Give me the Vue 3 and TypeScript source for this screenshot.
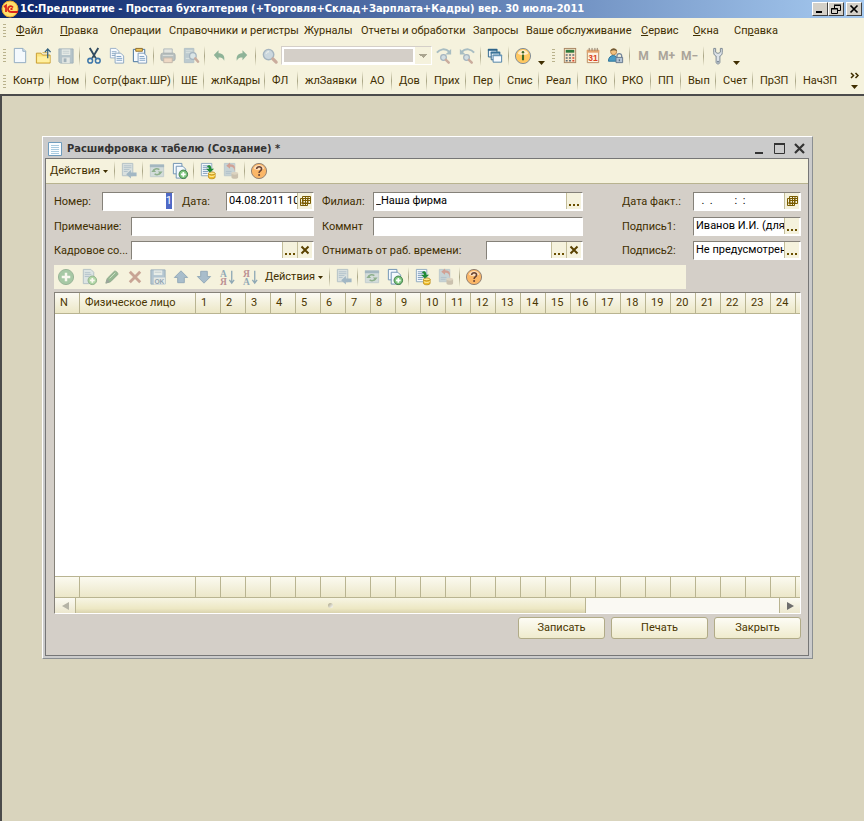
<script setup lang="ts">
import { onMounted, ref } from 'vue'

interface Tool {
  kind: 'icon' | 'sep' | 'text' | 'more' | 'grip' | 'combo' | 'label'
  name?: string
  title?: string
  off?: boolean
}

const icon = (name: string, title: string, off = false): Tool => ({ kind: 'icon', name, title, off })
const memory = (name: string, title: string): Tool => ({ kind: 'text', name, title, off: true })
const sep: Tool = { kind: 'sep' }

const page = '<path d="M3.5 1.5h9l3 3v12h-12z" fill="#f4f9fd" stroke="#8fa9c0"/><path d="M12.5 1.5v3h3" fill="#d3e2ef" stroke="#8fa9c0"/>'
const disk = '<path d="M2 2h15v15H3.500L2 15.500z" fill="#7f9db9" stroke="#5f7f9f"/><path d="M5 2.500h9v6H5z" fill="#dbe6ef"/><path d="M6 4.500h7M6 6.500h7" stroke="#9ab0c4"/><path d="M5.500 11h8v6h-8z" fill="#d5dfe8"/><path d="M7 12h3v4H7z" fill="#5f7f9f"/>'
const plus = '<circle cx="13" cy="13" r="4.500" fill="#7cc47c" stroke="#3b7a45"/><path d="M13 10.500v5M10.500 13h5" stroke="#fff" stroke-width="1.800"/>'
const cyl = '<path d="M10 12v4c0 2.300 7 2.300 7 0v-4z" fill="#f0bd2c" stroke="#b98a12" stroke-width=".8"/><ellipse cx="13.500" cy="12" rx="3.500" ry="1.500" fill="#ffe98c" stroke="#b98a12" stroke-width=".8"/><path d="M10.300 14.300c1 1.300 5.400 1.300 6.400 0" fill="none" stroke="#fff0a8"/>'
const listPage = '<path d="M2.500 1.500h11v13h-11z" fill="#f7fafc" stroke="#8fa9c0"/><path d="M4 4h8M4 6h8M4 8h8M4 10h6M4 12h5" stroke="#7c9cbc"/>'
const lens = '<circle cx="8" cy="8" r="5.500" fill="#a9c2e0" stroke="#6483a8" stroke-width="1.500"/><path d="M5.500 7c.5-1.500 1.500-2 3-2" fill="none" stroke="#fff"/><path d="M12.500 12.500l3.500 3.500" stroke="#a8746a" stroke-width="3.400" stroke-linecap="round"/>'
const smallLens = '<circle cx="9" cy="11" r="3" fill="#b9cfe6" stroke="#6483a8" stroke-width="1.300"/><path d="M11.500 13.500l3 3" stroke="#a8746a" stroke-width="2.600" stroke-linecap="round"/>'

const icons: Record<string, string> = {
  blank: page,
  open: '<path d="M2.500 6.500h5l1.500 2h8v8.500h-14.500z" fill="#fbe27a" stroke="#c79a2f"/><path d="M3.500 10h13v6h-13z" fill="#ffef9f"/><path d="M9 6h5" stroke="#d7ae45"/><path d="M14.500 12V3M11.500 5.500l3-3.500 3 3.500" fill="none" stroke="#305f7c" stroke-width="1.300"/>',
  save: disk,
  cut: '<path d="M5 1l6.500 11M14 1L7.500 12" stroke="#2f4a60" stroke-width="2"/><circle cx="5.500" cy="14.500" r="2.500" fill="none" stroke="#3d76aa" stroke-width="1.600"/><circle cx="13.500" cy="14.500" r="2.500" fill="none" stroke="#3d76aa" stroke-width="1.600"/>',
  copy: '<path d="M2.500 1.500h6l3 3v7h-9z" fill="#f8fbfe" stroke="#9ab0c8"/><path d="M4 5h5M4 7h5M4 9h4" stroke="#8aa6c4"/><path d="M7.500 6.500h6l3 3v7.500h-9z" fill="#f8fbfe" stroke="#8da7c2"/><path d="M9 10h5M9 12h6M9 14h6" stroke="#7da0c4"/>',
  paste: '<path d="M2.500 2.500h12v13h-12z" fill="#f7fbfe" stroke="#3e6d99"/><path d="M5 1.500h7v3H5z" fill="#f3c95b" stroke="#8e6d2c"/><path d="M7.500 6.500h6l3 3v7.500h-9z" fill="#f8fbfe" stroke="#7f9cba"/><path d="M9 10h5M9 12h6M9 14h6" stroke="#7da0c4"/>',
  print: '<path d="M5 2h9v5H5z" fill="#d4dbe4" stroke="#7b8ea2"/><rect x="2" y="6.500" width="15" height="8" rx="2" fill="#8898a8" stroke="#68798b"/><path d="M5 11.500h9v5H5z" fill="#e9c3b0" stroke="#9d8a82"/><path d="M4 9h11" stroke="#c7d1da"/>',
  preview: '<path d="M2.500 1.500h10v15h-10z" fill="#8fabc4" stroke="#7f9ab4"/><path d="M4 4h7M4 6h5M4 12h4" stroke="#c9d9e6"/><circle cx="11.500" cy="9.500" r="3.500" fill="#c5dbee" stroke="#6483a8" stroke-width="1.300"/><path d="M14 12l3 3.500" stroke="#a8746a" stroke-width="2.600" stroke-linecap="round"/>',
  undo: '<path d="M4 8.500l5-5v3c4 0 7 2 6 8-1.500-3-3-3.500-6-3.500v3z" fill="#3b8060"/>',
  redo: '<path d="M15 8.500l-5-5v3c-4 0-7 2-6 8 1.500-3 3-3.500 6-3.500v3z" fill="#3b8060"/>',
  find: lens,
  next: '<path d="M2 6c3-4 9-5 13-1" fill="none" stroke="#6a93ad" stroke-width="2"/><path d="M17 2v6h-6z" fill="#6a93ad"/>' + smallLens,
  prev: '<path d="M17 6c-3-4-9-5-13-1" fill="none" stroke="#6a93ad" stroke-width="2"/><path d="M2 2v6h6z" fill="#6a93ad"/>' + smallLens,
  windows: '<path d="M2.500 2.500h9v8h-9z" fill="#eaf3fa" stroke="#2d6389"/><path d="M2 3h10" stroke="#2d6389" stroke-width="2"/><path d="M5.500 5.500h9v8h-9z" fill="#eaf3fa" stroke="#2d6389"/><path d="M5 6h10" stroke="#397298" stroke-width="2"/><path d="M7.500 8.500h9v7.500h-9z" fill="#f7fbfe" stroke="#4c7fa5"/><path d="M7 9h10" stroke="#6796b8" stroke-width="1.500"/>',
  info: '<circle cx="9.500" cy="9.500" r="8" fill="#ffc861" stroke="#7d8b97"/><path d="M4 7c1-5 10-5 11 0-3 2-8 2-11 0z" fill="#fff" opacity=".65"/><circle cx="9.500" cy="5.500" r="1.300" fill="#3f6a28"/><path d="M9.500 8v6" stroke="#3f6a28" stroke-width="2.200"/>',
  calc: '<rect x="3.500" y="1.500" width="12" height="15" fill="#f6e3c8" stroke="#a98561"/><path d="M5 3h9v3H5z" fill="#2f7a3c"/><path d="M5 8.500h2M8.500 8.500h2M12 8.500h2M5 11.500h2M8.500 11.500h2M5 14.500h2M8.500 14.500h2" stroke="#5d6d74" stroke-width="1.600"/><path d="M12 11.500h2M12 14.500h2" stroke="#d9472b" stroke-width="1.600"/>',
  calendar: '<path d="M3.500 3.500h12v13h-12z" fill="#fdf3e2" stroke="#b98a5f"/><path d="M3 3h13v3H3z" fill="#e3a36d"/><path d="M5.500 1v3M8.500 1v3M11.500 1v3M14 1v3" stroke="#8c7b68"/><text x="9.500" y="15" text-anchor="middle" font-family="Liberation Sans, sans-serif" font-size="9" font-weight="bold" fill="#db4420">31</text>',
  user: '<circle cx="7" cy="5" r="3.200" fill="#f4c27f" stroke="#a9733c" stroke-width=".8"/><path d="M3.500 4.500C4 .5 10.500.5 10.500 4.500 9 3 6 3 3.500 4.500z" fill="#6d5a36"/><path d="M1.500 15c0-8 10-8 10 0z" fill="#4a9bc4" stroke="#2d7297"/><path d="M10.500 11V9.500a2.500 2.500 0 015 0V11" fill="none" stroke="#75869a" stroke-width="1.400"/><path d="M9.500 11h7v5.500h-7z" fill="#b4c4d4" stroke="#64788d"/><path d="M13 13v2" stroke="#44566a"/>',
  wrench: '<path d="M5 1.500v4.500c0 2 1 3 2.500 3.500v6.500c0 2.500 4 2.500 4 0V9.500C13 9 14 8 14 6V1.500h-2v4l-1.500 1h-2L7 5.500v-4z" fill="#dde3e8" stroke="#7a8690"/><circle cx="9.500" cy="15.500" r="1" fill="#6d7d8c"/>',
  close: '<path d="M2.500 1.500h11v13h-11z" fill="#c3d3e2" stroke="#7f9ab4"/><path d="M4 4h8M4 6h8M4 8h6M4 10h4" stroke="#7c9cbc"/><path d="M17.500 11v4h-6v2.500L6.500 13l5-4.500V11z" fill="#5f88b0"/>',
  refresh: '<path d="M2.500 3.500h14v12h-14z" fill="#b9cbd9" stroke="#9bb0c4"/><path d="M2 4h15" stroke="#6387aa" stroke-width="3"/><path d="M6 9c1-2 4-2.500 6-1M13 11.500c-1 2-4 2.500-6 1" fill="none" stroke="#3a7a4a" stroke-width="1.600"/><path d="M3.500 10.500l2.500-3 2.500 3zM10.500 10l2.500 3 2.500-3z" fill="#3a7a4a"/>',
  addcopy: '<path d="M2.500 1.500h9v11h-9z" fill="#f4f9fd" stroke="#6e91b2"/><path d="M5.500 4.500h7l3 3v9.500h-10z" fill="#f4f9fd" stroke="#6e91b2"/>' + plus,
  post: listPage + cyl + '<path d="M8 5c3-3 5-1.500 5 2h3l-4.500 4L7.500 7h3c0-1.500-1-2-2.500-2z" fill="#218a35"/>',
  unpost: '<path d="M2.500 1.500h11v13h-11z" fill="#a3bbcf" stroke="#8fa9c0"/><path d="M4 10h6M4 12h5" stroke="#7c9cbc"/><path d="M10 12v4c0 2.300 7 2.300 7 0v-4z" fill="#a99a88"/><ellipse cx="13.500" cy="12" rx="3.500" ry="1.500" fill="#c9bba9"/><path d="M12.500 10.500c1-4-.5-5.500-4-5.500V7L4.500 4l4-3.500v2c5 0 6.500 3 4 8z" fill="#b5605a"/>',
  help: '<circle cx="9.500" cy="9.500" r="8" fill="#fbb768" stroke="#8d7d70"/><path d="M4 7c1-5 10-5 11 0-3 2-8 2-11 0z" fill="#fff" opacity=".55"/><path d="M7 7.500c0-3.500 5.500-3.200 5.200 0-.2 1.900-2.600 1.900-2.600 4" fill="none" stroke="#6a4434" stroke-width="1.700"/><circle cx="9.600" cy="13.700" r="1.100" fill="#6a4434"/>',
  add: '<circle cx="9.500" cy="9.500" r="8" fill="#69a979" stroke="#4b805b"/><path d="M9.500 5v9M5 9.500h9" stroke="#fff" stroke-width="2.600"/>',
  addpage: '<path d="M3.500 1.500h8l3 3v12h-11z" fill="#c9dae8" stroke="#7f9ab4"/><path d="M5 5h6M5 7h7M5 9h5" stroke="#7c9cbc"/>' + plus,
  edit: '<path d="M3 16l1.500-5L12 3.500c1.500-1 4.500 2 3.500 3.500L8 14.500z" fill="#4b8a57" stroke="#3c6d49"/><path d="M3 16l1.200-4 2.800 2.800z" fill="#55616b"/><path d="M7 11l6-6" stroke="#b3d9b6"/>',
  remove: '<path d="M4 4l11 11M15 4L4 15" stroke="#a5665c" stroke-width="3"/>',
  saveok: '<path d="M2 2h15v15H2z" fill="#7fa3c8" stroke="#54799f"/><path d="M5 2.500h9v5H5z" fill="#dfe9f2"/><path d="M6 4.500h7" stroke="#9ab0c4"/><path d="M5 10h12v7.500H5z" fill="#d8e2ec"/><text x="11" y="16.500" text-anchor="middle" font-family="Liberation Sans, sans-serif" font-size="7" font-weight="bold" fill="#3f658c">OK</text>',
  up: '<path d="M9.500 3l7 7H13v5.500H6V10H2.500z" fill="#6a93bd" stroke="#456f9b"/>',
  down: '<path d="M9.500 16l7-7H13V3.500H6V9H2.500z" fill="#6a93bd" stroke="#456f9b"/>',
  asc: '<text x="2" y="9" font-family="Liberation Serif, serif" font-size="10" font-weight="bold" fill="#3e6e96">А</text><text x="2" y="18" font-family="Liberation Serif, serif" font-size="10" font-weight="bold" fill="#8e3f58">Я</text><path d="M14.500 3v12M12 12.500l2.500 3.500 2.500-3.500" fill="none" stroke="#3e6e96" stroke-width="1.400"/>',
  desc: '<text x="2" y="9" font-family="Liberation Serif, serif" font-size="10" font-weight="bold" fill="#8e3f58">Я</text><text x="2" y="18" font-family="Liberation Serif, serif" font-size="10" font-weight="bold" fill="#3e6e96">А</text><path d="M14.500 3v12M12 12.500l2.500 3.500 2.500-3.500" fill="none" stroke="#3e6e96" stroke-width="1.400"/>',
}

const mainTools: Tool[] = [
  { kind: 'grip' },
  icon('blank', 'Новый'), icon('open', 'Открыть'), icon('save', 'Сохранить', true), sep,
  icon('cut', 'Вырезать'), icon('copy', 'Копировать'), icon('paste', 'Вставить'), sep,
  icon('print', 'Печать', true), icon('preview', 'Просмотр', true), sep,
  icon('undo', 'Отменить', true), icon('redo', 'Вернуть', true), sep,
  icon('find', 'Найти', true), { kind: 'combo' },
  icon('next', 'Найти далее', true), icon('prev', 'Найти ранее', true), sep,
  icon('windows', 'Окна'), sep,
  icon('info', 'Справка'), { kind: 'more', title: 'Параметры панели' },
  { kind: 'grip' },
  icon('calc', 'Калькулятор'), icon('calendar', 'Календарь'), icon('user', 'Пользователи'), sep,
  memory('M', 'В память'), memory('M+', 'Прибавить к памяти'), memory('M−', 'Вычесть из памяти'), sep,
  icon('wrench', 'Сервис'), { kind: 'more', title: 'Кнопки панели' },
]

const docTools: Tool[] = [
  { kind: 'label' }, sep,
  icon('close', 'Записать и закрыть', true), sep,
  icon('refresh', 'Обновить', true), icon('addcopy', 'Скопировать'), sep,
  icon('post', 'Провести'), icon('unpost', 'Отменить проведение', true), sep,
  icon('help', 'Помощь'),
]

const gridTools: Tool[] = [
  icon('add', 'Добавить', true), icon('addpage', 'Добавить копированием', true),
  icon('edit', 'Изменить', true), icon('remove', 'Удалить', true),
  icon('saveok', 'Закончить редактирование', true),
  icon('up', 'Вверх', true), icon('down', 'Вниз', true),
  icon('asc', 'По возрастанию', true), icon('desc', 'По убыванию', true),
  ...docTools,
]

const toolbars = { main: mainTools, doc: docTools, grid: gridTools }

const menu: [string, string, string][] = [
  ['', 'Ф', 'айл'], ['', 'П', 'равка'], ['Операции', '', ''], ['Справочники и регистры', '', ''],
  ['Журналы', '', ''], ['Отчеты и обработки', '', ''], ['Запросы', '', ''], ['Ваше обслуживание', '', ''],
  ['', 'С', 'ервис'], ['', 'О', 'кна'], ['Сп', 'р', 'авка'],
]

const links = [
  'Контр', 'Ном', 'Сотр(факт.ШР)', 'ШЕ', 'жлКадры', 'ФЛ', 'жлЗаявки', 'АО', 'Дов', 'Прих', 'Пер',
  'Спис', 'Реал', 'ПКО', 'РКО', 'ПП', 'Вып', 'Счет', 'ПрЗП', 'НачЗП',
]

const days = Array.from({ length: 24 }, (_, i) => i + 1)

const docNumber = ref('1')
const docDate = ref('04.08.2011 10')
const branch = ref('_Наша фирма')
const note = ref('')
const comment = ref('')
const staff = ref('')
const deduct = ref('')
const factDate = ref('  .  .        :  :')
const sign1 = ref('Иванов И.И. (для')
const sign2 = ref('Не предусмотрен')

const numberInput = ref<HTMLInputElement | null>(null)
onMounted(() => {
  numberInput.value?.focus()
  numberInput.value?.select()
})
</script>

<template>
  <div class="app">
    <header class="titlebar">
      <svg class="logo" viewBox="0 0 18 18" aria-hidden="true">
        <circle cx="9" cy="9" r="8" fill="#ffdf6b" stroke="#e9a92c" />
        <path d="M3 7l2-1.500V12M12 7.500C10 5 7 6.500 7 9s2 3 4 3h6M11.500 9H9.500" fill="none" stroke="#d8251c" stroke-width="1.800" />
      </svg>
      <h1>1С:Предприятие - Простая бухгалтерия (+Торговля+Склад+Зарплата+Кадры) вер. 30 июля-2011</h1>
      <div class="sysbuttons">
        <button type="button" aria-label="Свернуть"><svg viewBox="0 0 14 12"><path d="M3 9h6" stroke="#000" stroke-width="2" /></svg></button>
        <button type="button" aria-label="Восстановить"><svg viewBox="0 0 14 12"><path d="M5.500 5V2.500h6v5H9M5 2h7M2.500 5.500h6v5h-6zM2 6h7" fill="none" stroke="#000" /></svg></button>
        <button type="button" class="apart" aria-label="Закрыть"><svg viewBox="0 0 14 12"><path d="M3.500 2.500l7 7M10.500 2.500l-7 7" stroke="#000" stroke-width="1.700" /></svg></button>
      </div>
    </header>

    <nav class="menubar" aria-label="Главное меню">
      <span class="grip"></span>
      <a v-for="m in menu" :key="m.join('')" href="#">{{ m[0] }}<u>{{ m[1] }}</u>{{ m[2] }}</a>
    </nav>

    <div class="toolbar main-tools" role="toolbar" aria-label="Стандартная">
      <template v-for="(t, i) in toolbars.main" :key="i">
        <span v-if="t.kind === 'grip'" class="grip"></span>
        <span v-else-if="t.kind === 'sep'" class="sep"></span>
        <select v-else-if="t.kind === 'combo'" class="combo" aria-label="Строка поиска" disabled></select>
        <button v-else-if="t.kind === 'more'" type="button" class="more" :aria-label="t.title">
          <svg viewBox="0 0 7 4"><path d="M0 0h7L3.500 4z" fill="#3f2e00" /></svg>
        </button>
        <button v-else-if="t.kind === 'text'" type="button" class="tool memory" :aria-label="t.title" disabled>{{ t.name }}</button>
        <button v-else type="button" class="tool" :class="{ off: t.off }" :disabled="t.off" :aria-label="t.title">
          <svg viewBox="0 0 19 19" v-html="icons[t.name ?? '']"></svg>
        </button>
      </template>
    </div>

    <nav class="links" aria-label="Быстрые команды">
      <span class="grip"></span>
      <a v-for="l in links" :key="l" href="#">{{ l }}</a>
      <button type="button" class="overflow" aria-label="Другие команды">
        <svg viewBox="0 0 10 18"><path d="M1 1l2.500 2.500L1 6M5.500 1L8 3.500 5.500 6" fill="none" stroke="#3f2e00" stroke-width="1.500" /><path d="M1 13h7l-3.500 4z" fill="#3f2e00" /></svg>
      </button>
    </nav>

    <main class="workspace">
      <section class="window">
        <header class="caption">
          <svg class="doc" viewBox="0 0 14 14" aria-hidden="true"><path d="M.5.5h13v13H.5z" fill="#fafdff" stroke="#6f9cbd" /><path d="M3 3.500h8M3 5.500h8M3 7.500h8M3 9.500h8M3 11.500h8" stroke="#a9cbe0" /></svg>
          <h2>Расшифровка к табелю (Создание) *</h2>
          <button type="button" aria-label="Свернуть окна"><svg viewBox="0 0 13 13"><path d="M2 11h8" stroke="#333" stroke-width="2" /></svg></button>
          <button type="button" aria-label="Развернуть окно"><svg viewBox="0 0 13 13"><path d="M1.500 1.500h10v10h-10z" fill="none" stroke="#333" /><path d="M1 2h11" stroke="#333" stroke-width="2" /></svg></button>
          <button type="button" aria-label="Закрыть окно"><svg viewBox="0 0 13 13"><path d="M2 2l9 9M11 2l-9 9" stroke="#333" stroke-width="2.200" /></svg></button>
        </header>

        <div class="client">
          <div class="toolbar doc-tools" role="toolbar" aria-label="Документ">
            <template v-for="(t, i) in toolbars.doc" :key="i">
              <span v-if="t.kind === 'sep'" class="sep"></span>
              <button v-else-if="t.kind === 'label'" type="button" class="actions">
                Действия <svg viewBox="0 0 5 3"><path d="M0 0h5L2.500 3z" fill="#3f2e00" /></svg>
              </button>
              <button v-else type="button" class="tool" :class="{ off: t.off }" :disabled="t.off" :aria-label="t.title">
                <svg viewBox="0 0 19 19" v-html="icons[t.name ?? '']"></svg>
              </button>
            </template>
          </div>

          <form class="body" @submit.prevent>
            <div class="fields">
              <div class="row">
                <label class="short" for="num">Номер:</label>
                <span class="box number"><input id="num" ref="numberInput" v-model="docNumber" type="text" autocomplete="off" /></span>
                <label class="date-label" for="date">Дата:</label>
                <span class="box grow"><input id="date" v-model="docDate" type="text" />
                  <button type="button" aria-label="Выбрать дату"><svg viewBox="0 0 12 12"><path d="M3.500 1.500h8v7h-8zM1.500 3.500h7v7h-7zM3.500 5.500h8M1.500 8h7M4 3v7M6.500 1v9M9 1v7M3 3.500h8" fill="none" stroke="#7a5c00" /></svg></button>
                </span>
              </div>
              <div class="row">
                <label class="mid" for="branch">Филиал:</label>
                <span class="box grow"><input id="branch" v-model="branch" type="text" /><button type="button" aria-label="Выбрать филиал"><svg viewBox="0 0 12 12"><path d="M1 10h2M5 10h2M9 10h2" stroke="#6b5000" stroke-width="2" /></svg></button></span>
              </div>
              <div class="row right">
                <label class="sign" for="fact">Дата факт.:</label>
                <span class="box grow"><input id="fact" v-model="factDate" class="mask" type="text" />
                  <button type="button" aria-label="Выбрать дату факта"><svg viewBox="0 0 12 12"><path d="M3.500 1.500h8v7h-8zM1.500 3.500h7v7h-7zM3.500 5.500h8M1.500 8h7M4 3v7M6.500 1v9M9 1v7M3 3.500h8" fill="none" stroke="#7a5c00" /></svg></button>
                </span>
              </div>

              <div class="row">
                <label class="long" for="note">Примечание:</label>
                <span class="box grow"><input id="note" v-model="note" type="text" /></span>
              </div>
              <div class="row">
                <label class="mid" for="comment">Коммнт</label>
                <span class="box grow"><input id="comment" v-model="comment" type="text" /></span>
              </div>
              <div class="row right">
                <label class="sign" for="sign1">Подпись1:</label>
                <span class="box grow"><input id="sign1" v-model="sign1" type="text" /><button type="button" aria-label="Выбрать первую подпись"><svg viewBox="0 0 12 12"><path d="M1 10h2M5 10h2M9 10h2" stroke="#6b5000" stroke-width="2" /></svg></button></span>
              </div>

              <div class="row">
                <label class="long" for="staff">Кадровое со...</label>
                <span class="box grow"><input id="staff" v-model="staff" type="text" /><button type="button" aria-label="Выбрать"><svg viewBox="0 0 12 12"><path d="M1 10h2M5 10h2M9 10h2" stroke="#6b5000" stroke-width="2" /></svg></button><button type="button" aria-label="Очистить"><svg viewBox="0 0 12 12"><path d="M2.500 2.500l7 7M9.500 2.500l-7 7" stroke="#5a4200" stroke-width="2" /></svg></button></span>
              </div>
              <div class="row">
                <label class="grow" for="deduct">Отнимать от раб. времени:</label>
                <span class="box deduct"><input id="deduct" v-model="deduct" type="text" /><button type="button" aria-label="Выбрать время"><svg viewBox="0 0 12 12"><path d="M1 10h2M5 10h2M9 10h2" stroke="#6b5000" stroke-width="2" /></svg></button><button type="button" aria-label="Очистить время"><svg viewBox="0 0 12 12"><path d="M2.500 2.500l7 7M9.500 2.500l-7 7" stroke="#5a4200" stroke-width="2" /></svg></button></span>
              </div>
              <div class="row right">
                <label class="sign" for="sign2">Подпись2:</label>
                <span class="box grow"><input id="sign2" v-model="sign2" type="text" /><button type="button" aria-label="Выбрать вторую подпись"><svg viewBox="0 0 12 12"><path d="M1 10h2M5 10h2M9 10h2" stroke="#6b5000" stroke-width="2" /></svg></button></span>
              </div>
            </div>

            <div class="toolbar grid-tools" role="toolbar" aria-label="Таблица">
              <template v-for="(t, i) in toolbars.grid" :key="i">
                <span v-if="t.kind === 'sep'" class="sep"></span>
                <button v-else-if="t.kind === 'label'" type="button" class="actions">
                  Действия <svg viewBox="0 0 5 3"><path d="M0 0h5L2.500 3z" fill="#3f2e00" /></svg>
                </button>
                <button v-else type="button" class="tool" :class="{ off: t.off }" :disabled="t.off" :aria-label="t.title">
                  <svg viewBox="0 0 19 19" v-html="icons[t.name ?? '']"></svg>
                </button>
              </template>
            </div>

            <div class="sheet">
              <table>
                <colgroup>
                  <col class="c-n" /><col class="c-name" /><col v-for="d in days" :key="d" class="c-day" /><col />
                </colgroup>
                <thead>
                  <tr><th>N</th><th>Физическое лицо</th><th v-for="d in days" :key="d">{{ d }}</th><th></th></tr>
                </thead>
                <tbody>
                  <tr><td :colspan="days.length + 3"></td></tr>
                </tbody>
                <tfoot>
                  <tr><td></td><td></td><td v-for="d in days" :key="d"></td><td></td></tr>
                </tfoot>
              </table>
              <div class="scroll">
                <button type="button" aria-label="Прокрутить влево"><svg viewBox="0 0 7 8"><path d="M7 0v8L0 4z" fill="#b5b3a6" /></svg></button>
                <div class="track"><div class="thumb"><span></span></div></div>
                <button type="button" class="fwd" aria-label="Прокрутить вправо"><svg viewBox="0 0 7 8"><path d="M0 0v8l7-4z" fill="#6d6d6d" /></svg></button>
              </div>
            </div>

            <div class="commands">
              <button type="button">Записать</button>
              <button type="button" class="wide">Печать</button>
              <button type="button">Закрыть</button>
            </div>
          </form>
        </div>
      </section>
    </main>
  </div>
</template>

<style>
html,
body,
#app {
  height: 100%;
}
</style>

<style scoped>
.app {
  display: flex;
  flex-direction: column;
  min-height: 100%;
  background: #f5f2dd;
  color: #3f2e00;
  font: 11px/16px Roboto, "Liberation Sans", sans-serif;
}
*,
*::before,
*::after {
  box-sizing: border-box;
}
button,
input,
select {
  font: inherit;
  color: inherit;
  margin: 0;
  padding: 0;
  border: 0;
  border-radius: 0;
  background: none;
}
button {
  display: flex;
  align-items: center;
  justify-content: center;
}
a {
  color: inherit;
  text-decoration: none;
  white-space: nowrap;
}
h1,
h2 {
  margin: 0;
  flex: 1;
  min-width: 0;
  overflow: hidden;
  white-space: nowrap;
  font: bold 11px/18px "DejaVu Sans Condensed", "DejaVu Sans", sans-serif;
}

.titlebar {
  display: flex;
  align-items: center;
  height: 18px;
  padding: 0 2px 0 1px;
  background: linear-gradient(90deg, #0a246a, #a6caf0);
  color: #fff;
}
.logo {
  width: 18px;
  height: 18px;
  margin-right: 1px;
}
.sysbuttons {
  display: flex;
}
.sysbuttons button {
  width: 16px;
  height: 14px;
  background: #d4d0c8;
  border: 1px solid;
  border-color: #fff #404040 #404040 #fff;
}
.sysbuttons .apart {
  margin-left: 2px;
}
.sysbuttons svg {
  width: 14px;
  height: 12px;
}

.grip {
  flex: none;
  width: 10px;
  height: 13px;
  background: repeating-linear-gradient(#b9b28c 0 1px, transparent 1px 3px) 4px 0 / 3px 13px no-repeat;
}
.grip:first-child {
  width: 8px;
  background-position: 3px 0;
}

.menubar {
  display: grid;
  grid-template-columns: 16px 44px 50px 59px 135px 57px 112px 53px 115px 52px 41px auto;
  align-items: center;
  height: 25px;
}

.toolbar {
  display: flex;
  align-items: center;
}
.main-tools {
  height: 25px;
}
.tool {
  flex: none;
  width: 23px;
  height: 22px;
}
.tool svg {
  width: 18px;
  height: 18px;
}
.off svg {
  opacity: 0.55;
}
.memory {
  font-size: 12px;
  font-weight: bold;
  color: #aaa49a;
}
.sep {
  flex: none;
  width: 5px;
  height: 20px;
  background: linear-gradient(#f5f2dd, #a9a585, #f5f2dd) 2px 0 / 1px 100% no-repeat;
}
.more {
  align-items: flex-end;
  width: 14px;
  height: 18px;
}
.more svg {
  width: 7px;
  height: 4px;
}
.combo {
  appearance: none;
  width: 151px;
  height: 19px;
  border: 1px solid;
  border-color: #d4cfc8 #fff #fff #d4cfc8;
  opacity: 1;
  background:
    conic-gradient(from -45deg at 50% 100%, #aaa590 90deg, transparent 0) right 4px top 7px / 8px 4px no-repeat,
    linear-gradient(#f5f2dd, #f5f2dd) right / 16px 100% no-repeat,
    linear-gradient(#d4cfc8, #d4cfc8) 2px 2px / 129px 13px no-repeat,
    #fff;
}

.links {
  display: grid;
  grid-template-columns: 8px 41px 36px 88px 30px 61px 33px 65px 29px 35px 39px 34px 39px 39px 37px 36px 30px 35px 37px 43px 1fr 18px;
  align-items: center;
  height: 26px;
}
.links a {
  padding-left: 8px;
  line-height: 20px;
  background: linear-gradient(#f5f2dd, #a9a585, #f5f2dd) 0 0 / 1px 100% no-repeat;
}
.links a:nth-child(2) {
  padding-left: 5px;
  background: none;
}
.overflow svg {
  width: 10px;
  height: 18px;
}

.workspace {
  flex: 1;
  padding: 40px 51px 40px 40px;
  background: #d9d4bd;
  border: 0 solid #4b4b4b;
  border-width: 2px 0 0 2px;
}
.window {
  padding: 0 3px 2px 2px;
  background: #cbcbcb;
  border: 1px solid;
  border-color: #fff #8b8f92 #8b8f92 #fff;
}
.caption {
  display: flex;
  align-items: center;
  height: 21px;
  padding: 2px 0 0 3px;
  color: #333;
}
.caption .doc {
  width: 14px;
  height: 14px;
  margin-right: 5px;
}
.caption button {
  width: 20px;
  height: 16px;
}
.caption button svg {
  width: 13px;
  height: 13px;
}
.client {
  border: 1px solid #767676;
  background: #d4cfc8;
}
.doc-tools {
  height: 25px;
  background: #f5f2dd;
  border-bottom: 1px solid #b8b38f;
}
.actions {
  gap: 3px;
  width: 66px;
  height: 20px;
}
.actions svg {
  width: 5px;
  height: 3px;
}

.body {
  padding: 8px 7px 8px 8px;
}
.fields {
  display: grid;
  grid-template-columns: 260px minmax(0, 1fr) 210px;
  grid-template-rows: 20px 19px 19px;
  gap: 5px 8px;
}
.row {
  display: flex;
  align-items: center;
  min-width: 0;
  height: 19px;
}
.right {
  padding-left: 31px;
}
label {
  white-space: nowrap;
  overflow: hidden;
}
.short {
  width: 48px;
}
.date-label {
  width: 52px;
  padding-left: 8px;
}
.mid {
  width: 51px;
}
.long {
  width: 77px;
}
.sign {
  width: 71px;
}
.grow {
  flex: 1;
  min-width: 0;
}
.box {
  display: flex;
  height: 19px;
  padding: 0 1px 1px 0;
  background: #fff;
  border: 1px solid;
  border-color: #858179 #fff #fff #858179;
  color: #000;
}
.box input {
  flex: 1;
  width: 0;
  min-width: 0;
  padding-left: 2px;
  outline: none;
}
.box input::selection {
  background: #4f69c6;
  color: #fff;
}
.box .mask {
  white-space: pre;
}
.number {
  width: 72px;
}
.number input {
  text-align: right;
}
.deduct {
  width: 97px;
}
.box button {
  width: 15px;
  background: #f5f2dd;
  border-left: 1px solid #c3bd99;
}
.box button svg {
  flex: none;
  width: 12px;
  height: 12px;
}

.grid-tools {
  width: calc(100% - 115px);
  height: 24px;
  margin-top: 5px;
  background: #f5f2dd;
}

.sheet {
  margin-top: 3px;
  background: #fff;
  border: 1px solid;
  border-color: #858179 #fff #fff #858179;
}
table {
  width: 100%;
  table-layout: fixed;
  border-collapse: separate;
  border-spacing: 0;
}
.c-n {
  width: 25px;
}
.c-name {
  width: 116px;
}
.c-day {
  width: 25px;
}
th,
td {
  padding: 0;
}
th {
  height: 21px;
  padding-left: 5px;
  overflow: hidden;
  text-align: left;
  font-weight: normal;
  white-space: nowrap;
  color: #4a3600;
  background: linear-gradient(#fbfaf3, #ece7c6);
  border-right: 1px solid #b9b491;
  border-bottom: 1px solid #b9b491;
}
tbody td {
  height: 262px;
}
tfoot td {
  height: 22px;
  background: linear-gradient(#fbfaf0, #ece7c9);
  border: 1px solid #b9b491;
  border-left: 0;
}
th:last-child,
tfoot td:last-child {
  padding: 0;
  border-right: 0;
}
.scroll {
  display: flex;
  height: 15px;
}
.scroll button {
  width: 21px;
  background: linear-gradient(#fbfaf3, #ece7cd);
  border-right: 1px solid #b9b491;
}
.scroll .fwd {
  border-right: 0;
  border-left: 1px solid #b9b491;
}
.scroll button svg {
  width: 7px;
  height: 8px;
}
.track {
  flex: 1;
  background: #faf9f3;
}
.thumb {
  display: flex;
  align-items: center;
  justify-content: center;
  width: 72.5%;
  height: 100%;
  background: linear-gradient(#f7f5e4, #ede8c4 70%, #d9d3ae);
  border-right: 1px solid #b9b491;
}
.thumb span {
  width: 5px;
  height: 5px;
  border-radius: 50%;
  background: linear-gradient(135deg, #a7a283, #fff);
}

.commands {
  display: flex;
  justify-content: flex-end;
  gap: 6px;
  margin-top: 3px;
  padding-bottom: 8px;
}
.commands button {
  width: 87px;
  height: 22px;
  color: #4a3600;
  background: linear-gradient(#fdfcf5, #efebcd);
  border: 1px solid #b1ab87;
  border-radius: 3px;
}
.commands .wide {
  width: 97px;
}
</style>
